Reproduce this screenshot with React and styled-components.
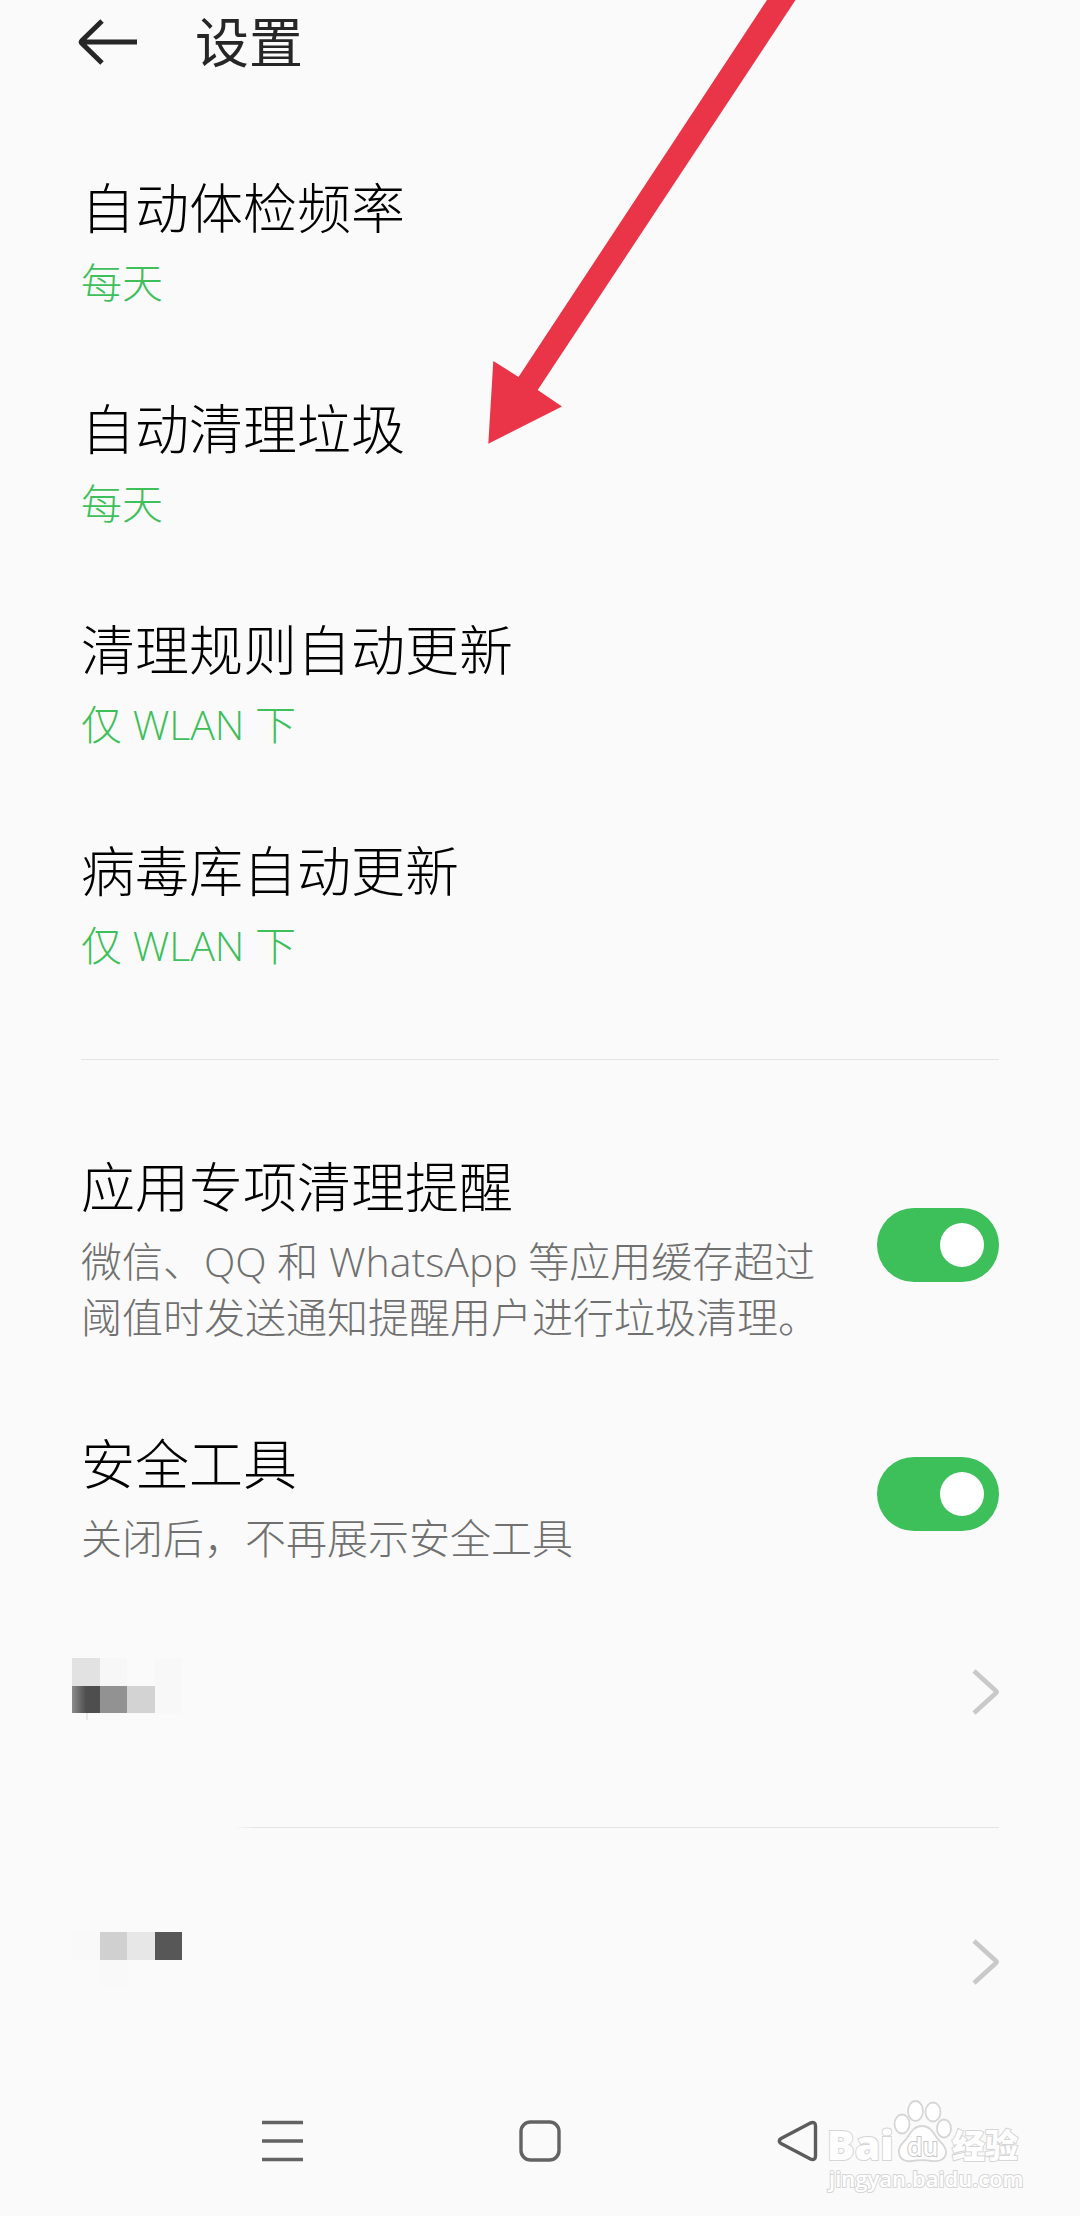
import React, { useState } from "react";
import styled, { createGlobalStyle } from "styled-components";

const frequencySettings = [
  { title: "自动体检频率", value: "每天" },
  { title: "自动清理垃圾", value: "每天" },
  { title: "清理规则自动更新", value: "仅 WLAN 下" },
  { title: "病毒库自动更新", value: "仅 WLAN 下" },
];

const switchSettings = [
  {
    id: "app-clean",
    title: "应用专项清理提醒",
    note: "微信、QQ 和 WhatsApp 等应用缓存超过阈值时发送通知提醒用户进行垃圾清理。",
  },
  {
    id: "safe-tools",
    title: "安全工具",
    note: "关闭后，不再展示安全工具",
  },
];

const SwitchRow = ({ id, title, note }) => {
  const [on, setOn] = useState(true);

  return (
    <SwitchItem>
      <label htmlFor={id}>
        <Title>{title}</Title>
        <Note>{note}</Note>
      </label>
      <Toggle
        id={id}
        type="checkbox"
        role="switch"
        checked={on}
        onChange={() => setOn(!on)}
      />
    </SwitchItem>
  );
};

const Chevron = () => (
  <svg width="28" height="48" viewBox="0 0 28 48" fill="none">
    <path d="M3 3 L25 23 Q26 24 25 25 L3 45" stroke="#c9c9c9" strokeWidth="4.6" />
  </svg>
);

const Watermark = () => (
  <WatermarkSvg width="220" height="110" viewBox="0 0 220 110">
    <g fill="#ffffff" stroke="#d6d6d6" strokeWidth="1.8">
      <ellipse cx="82" cy="34" rx="7.5" ry="9.5" />
      <ellipse cx="95.5" cy="21" rx="7.5" ry="10" />
      <ellipse cx="113" cy="22" rx="7.5" ry="9.5" />
      <ellipse cx="124" cy="38.5" rx="7" ry="9" />
      <path d="M102 36 C94 36 91 42 87 48 C82 54 78 57 79 63 C80 70 86 72 92 71 C98 70 106 70 112 71 C120 72 126 69 126 62 C126 56 121 53 117 48 C113 42 110 36 102 36 Z" />
    </g>
    <LogoText x="7" y="70" $size={41} $weight={800}>Bai</LogoText>
    <LogoText x="87" y="66" $size={25} $weight={600} $edge="#c8c8c8">du</LogoText>
    <LogoText x="132" y="68" $size={33} $weight={900}>经验</LogoText>
    <LogoText x="9" y="97" $size={22} $weight={600}>jingyan.baidu.com</LogoText>
  </WatermarkSvg>
);

export default function App() {
  return (
    <Page>
      <GlobalStyle />
      <Header>
        <BackButton aria-label="返回">
          <svg width="60" height="48" viewBox="0 0 60 48" fill="none">
            <path d="M24 3 L4 22.5 Q2.5 24 4 25.5 L24 45 M4 24 H59" stroke="#262626" strokeWidth="5" />
          </svg>
        </BackButton>
        <h1>设置</h1>
      </Header>

      <Content>
        <List>
          {frequencySettings.map(({ title, value }) => (
            <Setting key={title}>
              <Title>{title}</Title>
              <Value>{value}</Value>
            </Setting>
          ))}
        </List>
        <Divider />
        <List>
          {switchSettings.map((item) => (
            <SwitchRow key={item.id} {...item} />
          ))}
          <LinkRow href="#more" aria-label="更多">
            <svg width="110" height="98" shapeRendering="crispEdges">
              <defs>
                <linearGradient id="fade">
                  <stop offset="0" stopColor="#8c8c8c" />
                  <stop offset="0.5" stopColor="#4e4e4e" />
                </linearGradient>
              </defs>
              <rect x="0" y="15" width="28" height="28" fill="#e2e2e2" />
              <rect x="28" y="15" width="27" height="28" fill="#f7f7f7" />
              <rect x="83" y="15" width="27" height="55" fill="#f8f8f8" />
              <rect x="0" y="43" width="28" height="27" fill="url(#fade)" />
              <rect x="28" y="43" width="27" height="27" fill="#929292" />
              <rect x="55" y="43" width="28" height="27" fill="#d3d3d3" />
              <rect x="14" y="70" width="2" height="7" fill="#e8e8e8" />
            </svg>
            <Chevron />
          </LinkRow>
        </List>
        <Divider $indent />
        <LinkRow href="#about" aria-label="关于">
          <svg width="110" height="98" shapeRendering="crispEdges">
            <rect x="0" y="19" width="28" height="28" fill="#f9f9f9" />
            <rect x="28" y="19" width="27" height="28" fill="#d0d0d0" />
            <rect x="55" y="19" width="28" height="28" fill="#e7e7e7" />
            <rect x="83" y="19" width="27" height="28" fill="#575757" />
            <rect x="28" y="47" width="27" height="27" fill="#f9f9f9" />
          </svg>
          <Chevron />
        </LinkRow>
      </Content>

      <NavBar>
        <button aria-label="最近任务">
          <svg width="42" height="42" viewBox="0 0 42 42" fill="none">
            <path d="M0 2.5 H41 M0 21 H41 M0 39.5 H41" stroke="#636363" strokeWidth="3.6" />
          </svg>
        </button>
        <button aria-label="主屏幕">
          <svg width="42" height="42" viewBox="0 0 42 42" fill="none">
            <rect x="2" y="2" width="38" height="38" rx="9.5" stroke="#636363" strokeWidth="3.4" />
          </svg>
        </button>
        <button aria-label="返回上一页">
          <svg width="42" height="42" viewBox="0 0 42 42" fill="none">
            <path
              d="M5 18.5 L34 3.2 Q39.5 1 39.5 6 V36 Q39.5 41 34 38.8 L5 23.5 Q1.5 21 5 18.5 Z"
              stroke="#5c5c5c"
              strokeWidth="3.4"
              strokeLinejoin="round"
            />
          </svg>
        </button>
      </NavBar>

      <ArrowSvg width="308" height="444" viewBox="0 0 308 444">
        <path d="M279 0 H307.5 L49.7 390 L74 406.5 L0.3 443.7 L5.3 361 L30.5 377 Z" fill="#ea3448" />
      </ArrowSvg>
      <Watermark />
    </Page>
  );
}

const GlobalStyle = createGlobalStyle`
  * {
    box-sizing: border-box;
  }

  body {
    margin: 0;
    background: #fafafa;
    font-family: "Open Sans", "Noto Sans CJK SC", sans-serif;
  }

  button {
    border: none;
    padding: 0;
    background: none;
    font-family: inherit;
    cursor: pointer;
  }

  svg {
    display: block;
    flex-shrink: 0;
  }
`;

const Page = styled.div`
  position: relative;
  display: flex;
  flex-direction: column;
  min-height: 100vh;
  overflow: hidden;
`;

const Header = styled.header`
  display: flex;
  align-items: center;
  gap: 57px;
  height: 84px;
  padding: 0 78px;

  h1 {
    margin: 0;
    font-size: 54px;
    line-height: 84px;
    font-weight: 400;
    color: #262626;
  }
`;

const BackButton = styled.button`
  display: flex;
`;

const Content = styled.main`
  padding: 82px 81px 0;
`;

const List = styled.div`
  display: flex;
  flex-direction: column;
  gap: 77px;
`;

const Setting = styled.button`
  display: block;
  text-align: left;
`;

const Title = styled.span`
  display: block;
  margin-bottom: 4px;
  font-size: 54px;
  line-height: 84px;
  font-weight: 300;
  color: #000;
`;

const Note = styled.span`
  display: block;
  font-size: 41px;
  line-height: 56px;
  font-weight: 300;
  color: #707070;
`;

const Value = styled(Note)`
  color: #3dbf5a;
`;

const SwitchItem = styled.div`
  display: flex;
  align-items: center;
  justify-content: space-between;
  gap: 56px;
`;

const Toggle = styled.input`
  appearance: none;
  display: flex;
  flex-shrink: 0;
  align-items: center;
  justify-content: ${({ checked }) => (checked ? "flex-end" : "flex-start")};
  width: 122px;
  height: 74px;
  margin: 0;
  padding: 0 15px;
  border-radius: 37px;
  background: ${({ checked }) => (checked ? "#3dbf5a" : "#d8d8d8")};
  cursor: pointer;

  &::before {
    content: "";
    width: 44px;
    height: 44px;
    border-radius: 50%;
    background: #fff;
  }
`;

const Divider = styled.hr`
  height: 1px;
  margin: 86px 0 85px;
  margin-left: ${({ $indent }) => ($indent ? "152px" : "0")};
  border: none;
  background: linear-gradient(
    to right,
    ${({ $indent }) => ($indent ? "#fafafa" : "#e4e4e4")},
    #e4e4e4 24px
  );
`;

const LinkRow = styled.a`
  display: flex;
  align-items: center;
  justify-content: space-between;
  margin-left: -9px;
`;

const NavBar = styled.nav`
  display: grid;
  grid-template-columns: repeat(3, 1fr);
  height: 150px;
  margin-top: auto;
  padding: 0 154px;

  button {
    display: flex;
    align-items: center;
    justify-content: center;
  }
`;

/* drawn over the list, pointing at the second setting */
const ArrowSvg = styled.svg`
  position: absolute;
  top: 0;
  left: 488px;
  pointer-events: none;
`;

const WatermarkSvg = styled.svg`
  position: absolute;
  right: 40px;
  bottom: 16px;
  pointer-events: none;
`;

const LogoText = styled.text`
  font-family: "Open Sans", "Noto Sans CJK SC", sans-serif;
  font-size: ${({ $size }) => $size}px;
  font-weight: ${({ $weight }) => $weight};
  fill: #fff;
  stroke: ${({ $edge }) => $edge || "#d6d6d6"};
  stroke-width: 2px;
  paint-order: stroke;
`;
